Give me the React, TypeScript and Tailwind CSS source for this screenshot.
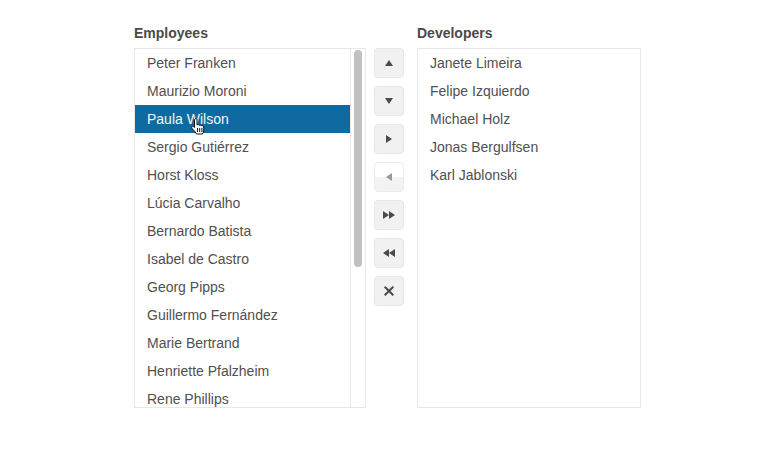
import type { ReactNode } from "react";

const employees = [
  "Peter Franken",
  "Maurizio Moroni",
  "Paula Wilson",
  "Sergio Gutiérrez",
  "Horst Kloss",
  "Lúcia Carvalho",
  "Bernardo Batista",
  "Isabel de Castro",
  "Georg Pipps",
  "Guillermo Fernández",
  "Marie Bertrand",
  "Henriette Pfalzheim",
  "Rene Phillips",
];

const developers = [
  "Janete Limeira",
  "Felipe Izquierdo",
  "Michael Holz",
  "Jonas Bergulfsen",
  "Karl Jablonski",
];

function Row({ name, selected }: { name: string; selected?: boolean }) {
  return (
    <div
      className={
        "h-7 shrink-0 pl-3 text-sm leading-7 whitespace-nowrap " +
        (selected ? "bg-[#0f6b9f] text-[#f2f6f9]" : "text-[#505050]")
      }
    >
      {name}
    </div>
  );
}

// mouse pointer sitting over the selected row
function HandCursor() {
  return (
    <svg viewBox="0 0 15 18" className="absolute left-[56px] top-[69px] z-10 h-[18px] w-[15px]">
      <path
        d="M3.500 1.500C4 .5 5.500.5 6 1.500V7c.6-.6 1.800-.5 2.200.3.600-.4 1.800-.3 2.100.5.700-.4 1.900-.1 2.200.8.300 1.400.3 3 .1 4.400-.2 1.100-.7 2-1.100 3H5.500C4.800 14.500 3.500 13.200 2.300 11.800 1.500 10.800.3 9.800.700 8.800c.5-.8 1.700-.5 2.800.6z"
        fill="#fff"
        stroke="#111"
        strokeWidth="1"
      />
      <path d="M6.500 10v4M8.700 10v4M10.900 10v4" stroke="#111" strokeWidth="1" fill="none" />
    </svg>
  );
}

function MoveButton({ children, faded }: { children: ReactNode; faded?: boolean }) {
  return (
    <button
      className={
        "flex h-[30px] w-[30px] items-center justify-center rounded-[4px] border " +
        (faded
          ? "border-[#ececec] bg-linear-to-b from-white from-50% to-[#f3f3f3] to-50%"
          : "border-[#e6e6e6] bg-[#f1f1f1]")
      }
    >
      {children}
    </button>
  );
}

function Glyph({ d, faded }: { d: string; faded?: boolean }) {
  return (
    <svg viewBox="0 0 14 14" className="h-3.5 w-3.5">
      <path d={d} fill={faded ? "#999999" : "#4a4a4a"} />
    </svg>
  );
}

export default function App() {
  return (
    <div className="flex h-[467px] w-[770px] bg-white pl-[134px] pt-[25px] font-['Liberation_Sans',Arial,sans-serif]">
      <div className="w-[232px]">
        <h2 className="h-[23px] text-sm leading-4 font-bold text-[#4a4a4a]">Employees</h2>
        <div className="relative flex h-[360px] border border-[#e8e8e8]">
          <div className="flex w-[215px] shrink-0 flex-col overflow-hidden">
            {employees.map((name) => (
              <Row key={name} name={name} selected={name === "Paula Wilson"} />
            ))}
          </div>
          <HandCursor />
          <div className="flex-1 border-l border-[#e8e8e8] pl-[3px] pt-px">
            <div className="h-[217px] w-2 rounded-full bg-[#c1c1c1]" />
          </div>
        </div>
      </div>

      <div className="ml-2 flex w-[30px] flex-col gap-2 pt-[23px]">
        <MoveButton>
          <Glyph d="M7 4l4 6H3z" />
        </MoveButton>
        <MoveButton>
          <Glyph d="M3 4h8l-4 6z" />
        </MoveButton>
        <MoveButton>
          <Glyph d="M4 3l6 4-6 4z" />
        </MoveButton>
        <MoveButton faded>
          <Glyph d="M10 3v8L4 7z" faded />
        </MoveButton>
        <MoveButton>
          <Glyph d="M1 3l6 4-6 4zM7 3l6 4-6 4z" />
        </MoveButton>
        <MoveButton>
          <Glyph d="M7 3v8L1 7zM13 3v8L7 7z" />
        </MoveButton>
        <MoveButton>
          <svg viewBox="0 0 14 14" className="h-3.5 w-3.5">
            <path d="M2.700 2.700l8.600 8.600M11.300 2.700l-8.600 8.600" stroke="#4a4a4a" strokeWidth="2" fill="none" />
          </svg>
        </MoveButton>
      </div>

      <div className="ml-[13px] w-[224px]">
        <h2 className="h-[23px] text-sm leading-4 font-bold text-[#4a4a4a]">Developers</h2>
        <div className="flex h-[360px] flex-col border border-[#e8e8e8]">
          {developers.map((name) => (
            <Row key={name} name={name} />
          ))}
        </div>
      </div>
    </div>
  );
}
